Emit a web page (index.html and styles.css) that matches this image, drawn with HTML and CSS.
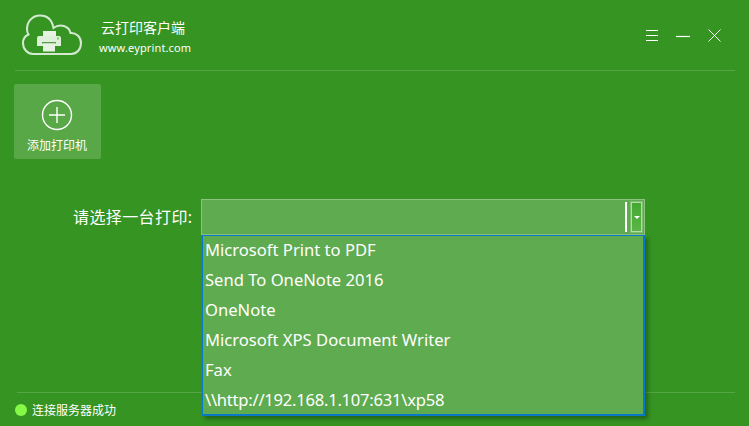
FILE: index.html
```html
<!DOCTYPE html>
<html lang="zh">
<head>
<meta charset="utf-8">
<title>云打印客户端</title>
<link rel="stylesheet" href="styles.css">
</head>
<body>
<div class="app">
  <header class="header">
    <svg class="logo" width="60" height="44" viewBox="0 0 60 44">
      <path d="M11 40 H49 C55 40 59 35 59 29 C59 23 54 18.500 48.500 19 C47 12 38 9 31.500 14 C30 6 25 1.500 18 1.500 C10 1.500 5 8 5 15 C5 17 5.500 19 6.500 20.500 C3 22 1 25 1 29 C1 35 5.500 40 11 40 Z" fill="none" stroke="#d4ead0" stroke-width="2"/>
      <rect x="21" y="17" width="13" height="6" fill="#e6f3e2"/>
      <path d="M15 24 Q15 22 17 22 H37 Q39 22 39 24 V32 H15 Z" fill="#dff0da"/>
      <rect x="20" y="28" width="14" height="1.500" fill="#5a9a4c"/>
      <rect x="21" y="29.500" width="12" height="8" fill="#e6f3e2"/>
      <rect x="35" y="23.500" width="2" height="2" fill="#6fd35c"/>
    </svg>
    <div class="brand">
      <div class="brand-title">云打印客户端</div>
      <div class="brand-url">www.eyprint.com</div>
    </div>
    <div class="window-controls">
      <svg width="12" height="12" viewBox="0 0 12 12"><path d="M0 .5H12M0 5.500H12M0 10.500H12" stroke="#fff" fill="none"/></svg>
      <svg width="14" height="12" viewBox="0 0 14 12"><path d="M0 6.500H14" stroke="#fff" fill="none" stroke-width="1.200"/></svg>
      <svg width="13" height="13" viewBox="0 0 13 13"><path d="M.5.500L12.500 12.500M12.500.500L.5 12.500" stroke="#fff" fill="none"/></svg>
    </div>
  </header>

  <main class="main">
    <button class="add-printer" type="button">
      <svg width="32" height="32" viewBox="0 0 32 32"><circle cx="16" cy="16" r="14.500" fill="none" stroke="#fff" stroke-width="1.400"/><path d="M16 8V24M8 16H24" stroke="#fff" stroke-width="1.400" fill="none"/></svg>
      <span>添加打印机</span>
    </button>

    <div class="printer-row">
      <label class="printer-label">请选择一台打印:</label>
      <div class="select">
        <div class="select-field">
          <i class="select-divider"></i>
          <div class="select-button"><i class="select-arrow"></i></div>
        </div>
        <ul class="dropdown">
          <li>Microsoft Print to PDF</li>
          <li>Send To OneNote 2016</li>
          <li>OneNote</li>
          <li>Microsoft XPS Document Writer</li>
          <li>Fax</li>
          <li class="item-path">\\http://192.168.1.107:631\xp58</li>
        </ul>
      </div>
    </div>
  </main>

  <footer class="footer">
    <i class="status-dot"></i>
    <span>连接服务器成功</span>
  </footer>
</div>
</body>
</html>
```
FILE: styles.css
```css
* { box-sizing: border-box; }
html, body { margin: 0; height: 100%; }
body {
  background: #369423;
  color: #fff;
  font-family: "Noto Sans", "Noto Sans CJK SC", sans-serif;
  overflow: hidden;
}
.app {
  height: 426px;
  display: flex;
  flex-direction: column;
  padding: 0 14px 0 15px;
}
.header {
  height: 71px;
  flex: none;
  display: flex;
  align-items: flex-start;
  border-bottom: 1px solid #55a544;
}
.logo { margin: 14px 0 0 7px; flex: none; }
.brand { margin: 18px 0 0 17px; }
.brand-title { font-size: 14px; line-height: 20px; margin-left: 2px; }
.brand-url { font-size: 11px; line-height: 16px; margin-top: 2px; letter-spacing: .14px; }
.window-controls {
  margin: 29px 14px 0 auto;
  display: flex;
  align-items: center;
  gap: 18px;
}
.window-controls svg { display: block; }
.main { flex: 1; display: flex; flex-direction: column; align-items: flex-start; }
.add-printer {
  margin: 13px 0 0 -1px;
  width: 87px;
  height: 75px;
  padding: 15px 1px 0 0;
  border: 0;
  border-radius: 2px;
  background: #58a848;
  color: #fff;
  font: inherit;
  font-size: 12px;
  line-height: 17px;
  display: flex;
  flex-direction: column;
  align-items: center;
  gap: 6px;
}
.printer-row {
  margin: 40px 0 0 58px;
  display: flex;
  align-items: center;
  align-self: stretch;
}
.printer-label { font-size: 16px; letter-spacing: .4px; line-height: 36px; width: 128px; flex: none; white-space: nowrap; }
.select { position: relative; width: 444px; }
.select-field {
  height: 36px;
  background: #5fab50;
  border: 1px solid #8cc380;
  display: flex;
  align-items: center;
  justify-content: flex-end;
  padding-right: 1px;
}
.select-divider { width: 2px; height: 30px; background: #fff; margin-right: 3px; }
.select-button {
  width: 13px;
  height: 32px;
  border: 1px solid #7fbd72;
  background: #b4dba9;
  padding: 1px;
  display: flex;
}
.select-arrow {
  flex: 1;
  position: relative;
  background: linear-gradient(#45a830, #5ab546);
}
.select-arrow::after {
  content: "";
  position: absolute;
  left: 50%;
  top: 50%;
  margin: -1px 0 0 -3px;
  border-left: 3px solid transparent;
  border-right: 3px solid transparent;
  border-top: 3px solid #fff;
}
.dropdown {
  position: absolute;
  left: 1px;
  top: 36px;
  width: 443px;
  height: 181px;
  margin: 0;
  padding: 0;
  list-style: none;
  background: #5fab50;
  border-left: 1px solid #0a78c8;
  border-top: 1px solid #0a78c8;
  border-right: 2px solid #0a78c8;
  border-bottom: 2px solid #0a78c8;
  box-shadow: 3px 3px 4px rgba(20, 60, 15, .55);
}
.dropdown li {
  height: 30px;
  line-height: 28px;
  padding-left: 2px;
  font-size: 16.600px;
  white-space: nowrap;
}
.dropdown .item-path { letter-spacing: -.25px; }
.footer {
  height: 34px;
  flex: none;
  border-top: 1px solid #55a544;
  margin-left: 2px;
  display: flex;
  align-items: center;
  gap: 5px;
  font-size: 12px;
}
.status-dot {
  width: 12px;
  height: 12px;
  margin-left: -2px;
  border-radius: 50%;
  background: #86f846;
}
```
